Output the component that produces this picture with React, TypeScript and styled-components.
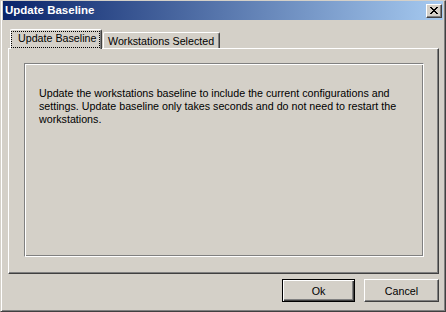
import React from "react";
import styled, { createGlobalStyle } from "styled-components";

const face = "#d4d0c8";
const shadow = "#808080";
const darkShadow = "#404040";

const GlobalStyle = createGlobalStyle`
	html, body {
		margin: 0;
		padding: 0;
		background: ${face};
	}
	body {
		font-family: "Liberation Sans", Arial, sans-serif;
		font-size: 10.7px;
		color: #000;
	}
`;

const Window = styled.div`
	box-sizing: border-box;
	width: 446px;
	height: 312px;
	display: flex;
	flex-direction: column;
	background: ${face};
	border-top: 1px solid ${face};
	border-left: 1px solid ${face};
	border-right: 1px solid ${darkShadow};
	border-bottom: 1px solid ${darkShadow};
	box-shadow: inset 1px 0 #fff, inset -1px -1px ${shadow};
	padding: 0 2px 2px 2px;
`;

const TitleBar = styled.div`
	height: 19px;
	display: flex;
	align-items: center;
	justify-content: space-between;
	padding-left: 2px;
	background: linear-gradient(to right, #0a246a, #a6caf0);
`;

const Title = styled.span`
	color: #fff;
	font-weight: bold;
	font-size: 11.5px;
	line-height: 19px;
`;

const CloseButton = styled.button`
	box-sizing: border-box;
	width: 16px;
	height: 14px;
	margin-right: 1px;
	padding: 0;
	display: flex;
	align-items: center;
	justify-content: center;
	background: ${face};
	border: 1px solid;
	border-color: #fff ${darkShadow} ${darkShadow} #fff;
	box-shadow: inset -1px -1px ${shadow};
`;

const Body = styled.div`
	flex: 1;
	display: flex;
	flex-direction: column;
	padding: 9px 4px 0 5px;
`;

const TabStrip = styled.div`
	display: flex;
	align-items: flex-end;
	height: 19px;
	padding-left: 2px;
`;

const Tab = styled.div<{ $active?: boolean }>`
	box-sizing: border-box;
	position: relative;
	z-index: ${({ $active }) => ($active ? 2 : 1)};
	width: ${({ $active }) => ($active ? "92px" : "117px")};
	height: ${({ $active }) => ($active ? "20px" : "16px")};
	margin-bottom: ${({ $active }) => ($active ? "-1px" : "0")};
	margin-left: ${({ $active }) => ($active ? "0" : "1px")};
	background: ${face};
	border-top: 1px solid #fff;
	border-left: 1px solid #fff;
	border-right: 1px solid ${darkShadow};
	border-radius: 2px 2px 0 0;
	box-shadow: inset -1px 0 ${shadow};
	padding: ${({ $active }) => ($active ? "1px 1px 0 0" : "2px 0 0 4px")};
	line-height: 13px;
	white-space: nowrap;
`;

const FocusRing = styled.span`
	box-sizing: border-box;
	display: block;
	width: 89px;
	height: 17px;
	border: 1px dotted #000;
	padding-left: 6px;
	line-height: 13px;
`;

const Panel = styled.div`
	box-sizing: border-box;
	height: 226px;
	background: ${face};
	border-top: 1px solid #fff;
	border-left: 1px solid #fff;
	border-right: 1px solid ${darkShadow};
	border-bottom: 1px solid ${darkShadow};
	box-shadow: inset -1px -1px ${shadow};
	padding: 14px 14px 16px 15px;
	display: flex;
`;

const Group = styled.div`
	box-sizing: border-box;
	flex: 1;
	min-width: 0;
	border: 1px solid;
	border-color: ${shadow} #fff #fff ${shadow};
	box-shadow: inset 1px 1px #fff, inset -1px -1px ${shadow};
	padding: 23px 0 0 14px;
	overflow: hidden;
`;

const Message = styled.p`
	margin: 0;
	line-height: 13px;
	white-space: pre;
`;

const ButtonRow = styled.div`
	display: flex;
	justify-content: flex-end;
	gap: 9px;
	margin-top: 5px;
`;

const Button = styled.button<{ $default?: boolean }>`
	box-sizing: border-box;
	width: ${({ $default }) => ($default ? "73px" : "75px")};
	height: 23px;
	padding: 0;
	font-family: "Liberation Sans", Arial, sans-serif;
	font-size: 10.7px;
	color: #000;
	background: ${face};
	border: 1px solid;
	border-color: ${({ $default }) =>
		$default ? "#000" : `#fff ${darkShadow} ${darkShadow} #fff`};
	box-shadow: ${({ $default }) =>
		$default
			? `inset 1px 1px #fff, inset -1px -1px ${darkShadow}, inset -2px -2px ${shadow}`
			: `inset -1px -1px ${shadow}`};
`;

const CloseGlyph = () => (
	<svg width="8" height="7" viewBox="0 0 8 7" shapeRendering="crispEdges">
		<path
			d="M0 0h2v1H0zM6 0h2v1H6zM1 1h2v1H1zM5 1h2v1H5zM2 2h4v1H2zM3 3h2v1H3zM2 4h4v1H2zM1 5h2v1H1zM5 5h2v1H5zM0 6h2v1H0zM6 6h2v1H6z"
			fill="#000"
		/>
	</svg>
);

export default function App() {
	return (
		<>
			<GlobalStyle />
			<Window>
				<TitleBar>
					<Title>Update Baseline</Title>
					<CloseButton aria-label="Close">
						<CloseGlyph />
					</CloseButton>
				</TitleBar>
				<Body>
					<TabStrip>
						<Tab $active>
							<FocusRing>Update Baseline</FocusRing>
						</Tab>
						<Tab>Workstations Selected</Tab>
					</TabStrip>
					<Panel>
						<Group>
							<Message>
								{"Update the workstations baseline to include the current configurations and\nsettings. Update baseline only takes seconds and do not need to restart the\nworkstations."}
							</Message>
						</Group>
					</Panel>
					<ButtonRow>
						<Button $default>Ok</Button>
						<Button>Cancel</Button>
					</ButtonRow>
				</Body>
			</Window>
		</>
	);
}
